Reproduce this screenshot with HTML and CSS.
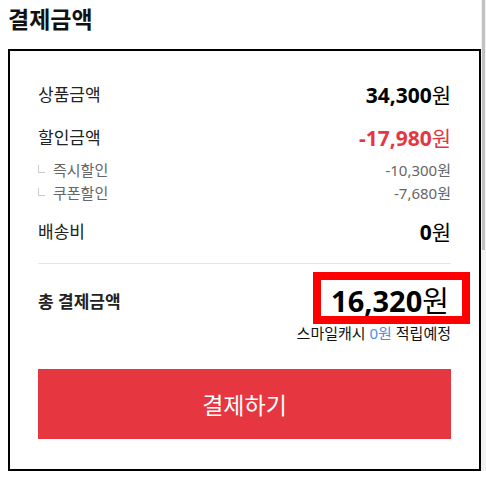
FILE: index.html
```html
<!DOCTYPE html>
<html>
    <head>
        <meta charset="UTF-8">
        <meta name="viewport" content="width=device-width, initial-scale=1.0">
        <title>결제금액</title>
        <link rel="stylesheet" href="styles.css">
    </head>
    <body>
        <h1 class="title">결제금액</h1>
        <div class="summary">
            <div class="row">
                <span class="label">상품금액</span>
                <span class="price"><b>34,300</b>원</span>
            </div>
            <div class="row discount">
                <span class="label">할인금액</span>
                <span class="price"><b>-17,980</b>원</span>
            </div>
            <ul class="sub-list">
                <li class="sub-row"><span class="sub-label">즉시할인</span><span>-10,300원</span></li>
                <li class="sub-row"><span class="sub-label">쿠폰할인</span><span>-7,680원</span></li>
            </ul>
            <div class="row shipping">
                <span class="label">배송비</span>
                <span class="price"><b>0</b>원</span>
            </div>
            <div class="total">
                <div class="row">
                    <span class="label strong">총 결제금액</span>
                    <span class="total-price"><b>16,320</b>원</span>
                </div>
                <p class="cash">스마일캐시 <em>0원</em> 적립예정</p>
            </div>
            <button class="pay-btn">결제하기</button>
        </div>
    </body>
</html>
```

FILE: styles.css
```css
html {
    background:
        linear-gradient(#c1c1c1, #c1c1c1) right 1px top 0 / 3px 250px no-repeat,
        linear-gradient(#f1f1f1, #f1f1f1) right top / 5px 100% no-repeat,
        #fff;
}
body {
    margin: 0 5px 0 8px;
    font-family: "Noto Sans", "Noto Sans CJK KR", sans-serif;
    color: #222;
}
.title {
    margin: 4px 0 15px;
    font-size: 23px;
    line-height: 30px;
    font-weight: bold;
    color: #111;
}
.summary {
    border: 2px solid #000;
    padding: 32px 28px 30px;
}
.row {
    display: flex;
    justify-content: space-between;
    align-items: center;
    font-size: 17px;
    line-height: 24px;
}
.price {
    font-size: 21px;
    color: #000;
}
.price b {
    font-weight: bold;
}
.discount {
    margin-top: 19px;
}
.discount .price {
    color: #e63741;
}
.sub-list {
    list-style: none;
    margin: 9px 0 0;
    padding: 0;
}
.sub-row {
    display: flex;
    justify-content: space-between;
    align-items: center;
    line-height: 23px;
    font-size: 15px;
    color: #666;
}
.sub-label {
    display: flex;
    align-items: center;
}
.sub-label::before {
    content: "";
    width: 6px;
    height: 7px;
    margin: -3px 8px 0 0;
    border-left: 1px solid #ccc;
    border-bottom: 1px solid #ccc;
}
.shipping {
    margin-top: 15px;
}
.total {
    margin-top: 19px;
    padding-top: 26px;
    border-top: 1px solid #e5e5e5;
}
.strong {
    font-weight: bold;
}
.total-price {
    position: relative;
    z-index: 1;
    border: 8px solid #ff0000;
    padding: 5px 13px 0 10px;
    margin: -18px -19px -10px 0;
    background: #fff;
    font-size: 29px;
    line-height: 31px;
    color: #000;
}
.cash {
    margin: 9px 0 0;
    text-align: right;
    font-size: 15px;
    line-height: 20px;
    color: #111;
}
.cash em {
    font-style: normal;
    color: #4a90e2;
}
.pay-btn {
    display: block;
    width: 100%;
    height: 70px;
    margin-top: 26px;
    border: none;
    background-color: #e63741;
    color: #fff;
    font-family: "Noto Sans CJK KR", sans-serif;
    font-size: 23px;
    cursor: pointer;
}
```
